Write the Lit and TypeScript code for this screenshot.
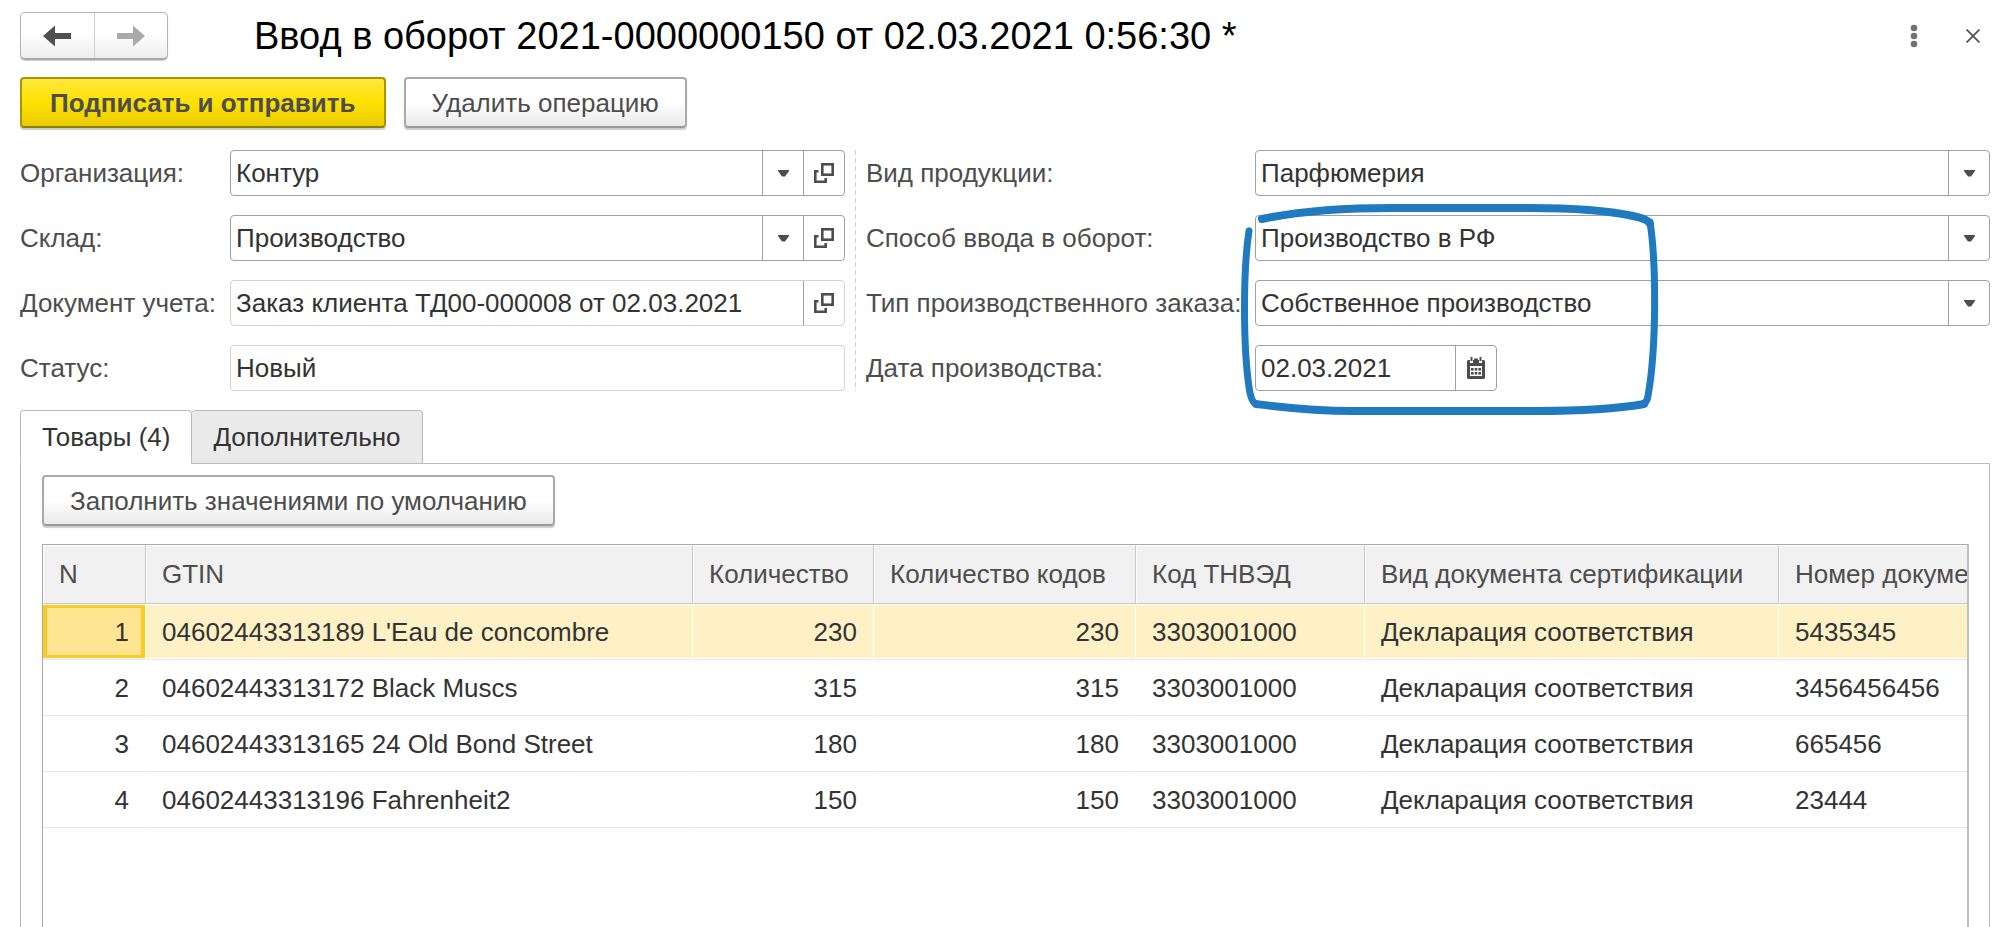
import { LitElement, html, svg, css, nothing } from "lit";
import { customElement, property, state } from "lit/decorators.js";
import { classMap } from "lit/directives/class-map.js";

type Row = [string, string, string, string, string, string, string];

const COLUMNS = [
  { title: "N", cls: "c-n num" },
  { title: "GTIN", cls: "c-gtin" },
  { title: "Количество", cls: "c-qty num" },
  { title: "Количество кодов", cls: "c-codes num" },
  { title: "Код ТНВЭД", cls: "c-tn" },
  { title: "Вид документа сертификации", cls: "c-doc" },
  { title: "Номер документа", cls: "c-no" },
];

const ROWS: Row[] = [
  ["1", "04602443313189 L'Eau de concombre", "230", "230", "3303001000", "Декларация соответствия", "5435345"],
  ["2", "04602443313172 Black Muscs", "315", "315", "3303001000", "Декларация соответствия", "3456456456"],
  ["3", "04602443313165 24 Old Bond Street", "180", "180", "3303001000", "Декларация соответствия", "665456"],
  ["4", "04602443313196 Fahrenheit2", "150", "150", "3303001000", "Декларация соответствия", "23444"],
];

const caretIcon = html`<svg width="11" height="7" viewBox="0 0 11 7" aria-hidden="true">
  <path d="M0 0H11V1L7 6.500H4L0 1Z" fill="#4d4d4d" />
</svg>`;

const openIcon = html`<svg width="20" height="20" viewBox="0 0 20 20" fill="none" stroke="#4d4d4d" stroke-width="2.600" aria-hidden="true">
  <rect x="8.300" y="1.300" width="10.400" height="10.400" />
  <path d="M4.500 8.300H1.300V18.700H11.700V15" />
</svg>`;

const calendarIcon = html`<svg width="18" height="22" viewBox="0 0 18 22" aria-hidden="true">
  <path fill="#4d4d4d" fill-rule="evenodd" d="M1 3H3V6H6V3H12V6H15V3H17L18 4V21L17 22H1L0 21V4ZM3 9V19H15V9Z" />
  <path fill="#4d4d4d" d="M3.500 0H5.500V4H3.500ZM12.500 0H14.500V4H12.500ZM7 1.500H11V4H7Z" />
  ${[4, 7.7, 11.4].map((x) => [11, 15].map((y) => svg`<rect x=${x} y=${y} width="2.600" height="2.600" fill="#4d4d4d" />`))}
</svg>`;

@customElement("form-field")
export class FormField extends LitElement {
  @property() kind: "select" | "text" | "date" = "text";
  @property() label = "";
  @property() value = "";
  @property({ type: Boolean }) readonly = false;
  @property({ type: Boolean }) openable = false;

  static styles = css`
    :host {
      display: grid;
      grid-template-columns: var(--label-width) minmax(0, 1fr);
      align-items: center;
    }
    label {
      color: #4d4d4d;
      white-space: nowrap;
    }
    .box {
      display: flex;
      box-sizing: border-box;
      height: 46px;
      border: 1px solid #a0a0a0;
      border-radius: 4px;
      background: #fff;
      overflow: hidden;
    }
    .box.readonly {
      border-color: #d2d2d2;
    }
    .box.date {
      width: 242px;
    }
    .entry {
      display: grid;
      flex: 1;
      min-width: 0;
    }
    input,
    select,
    .arrow {
      grid-area: 1 / 1;
    }
    input,
    select {
      appearance: none;
      box-sizing: border-box;
      width: 100%;
      min-width: 0;
      border: 0;
      margin: 0;
      padding: 0 5px;
      background: transparent;
      color: #333;
      font: inherit;
      outline: 0;
    }
    .arrow,
    button {
      display: flex;
      align-items: center;
      justify-content: center;
      box-sizing: border-box;
      width: 41px;
      border: 0;
      border-left: 1px solid #a0a0a0;
      padding: 0;
      background: none;
    }
    .arrow {
      justify-self: end;
      pointer-events: none;
    }
  `;

  render() {
    return html`
      <label for="control">${this.label}</label>
      <div class=${classMap({ box: true, readonly: this.readonly, date: this.kind === "date" })}>
        <div class="entry">
          ${this.kind === "select"
            ? html`<select id="control"><option>${this.value}</option></select>
                <span class="arrow">${caretIcon}</span>`
            : html`<input id="control" type="text" .value=${this.value} ?readonly=${this.readonly} />`}
        </div>
        ${this.openable ? html`<button type="button" aria-label="Открыть">${openIcon}</button>` : nothing}
        ${this.kind === "date" ? html`<button type="button" aria-label="Выбрать дату">${calendarIcon}</button>` : nothing}
      </div>
    `;
  }
}

@customElement("app-root")
export class AppRoot extends LitElement {
  @state() private tab = 0;
  @state() private selected = 0;

  static styles = css`
    :host {
      display: flex;
      flex-direction: column;
      box-sizing: border-box;
      min-height: 100vh;
      padding: 11px 5px 0 20px;
      background: #fff;
      color: #333;
      font: 26px/30px "Liberation Sans", Arial, sans-serif;
    }
    button {
      font: inherit;
      color: inherit;
    }
    header {
      display: flex;
      align-items: center;
      height: 50px;
    }
    .nav {
      display: flex;
      box-sizing: border-box;
      width: 148px;
      height: 48px;
      border: 1px solid #b4b4b4;
      border-bottom: 2px solid #a8a8a8;
      border-radius: 5px;
      background: linear-gradient(#fff 40%, #eee);
      box-shadow: 0 1px 1px #ccc;
    }
    .nav button {
      display: flex;
      flex: 1;
      align-items: center;
      justify-content: center;
      border: 0;
      padding: 0;
      background: none;
    }
    .nav button + button {
      border-left: 1px solid #d0d0d0;
    }
    h1 {
      flex: 1;
      margin: 0 0 0 86px;
      color: #000;
      font-size: 38px;
      line-height: 42px;
      font-weight: 400;
      white-space: nowrap;
    }
    .tools {
      display: flex;
      gap: 22px;
    }
    .tools button {
      display: flex;
      align-items: center;
      justify-content: center;
      width: 40px;
      height: 40px;
      border: 0;
      padding: 0;
      background: none;
    }
    .tools button:last-child {
      width: 34px;
    }
    .actions {
      display: flex;
      gap: 18px;
      margin-top: 16px;
    }
    .btn {
      box-sizing: border-box;
      height: 51px;
      border: 2px solid #aaa;
      border-bottom-color: #999;
      border-radius: 4px;
      padding: 0 26px;
      background: linear-gradient(#fff 50%, #e9e9e9);
      box-shadow: 0 2px 1px #ccc;
      color: #4d4d4d;
      white-space: nowrap;
    }
    .btn.primary {
      border-color: #a89600;
      border-bottom-color: #8c7c00;
      padding: 0 28px;
      background: linear-gradient(#ffe83c, #ffe100 50%, #e8cc00);
      font-weight: 700;
    }
    .form {
      display: grid;
      grid-template-columns: minmax(0, 825fr) 1px minmax(0, 1124fr);
      column-gap: 10px;
      margin-top: 22px;
    }
    .half {
      position: relative;
      display: flex;
      flex-direction: column;
      gap: 19px;
    }
    .left {
      --label-width: 210px;
    }
    .right {
      --label-width: 389px;
    }
    .divider {
      background: repeating-linear-gradient(#d0d0d0 0 5px, transparent 5px 8px);
    }
    .mark {
      position: absolute;
      left: 374px;
      top: 50px;
      pointer-events: none;
    }
    .tabs {
      display: flex;
      margin-top: 19px;
    }
    .tabs button {
      box-sizing: border-box;
      height: 54px;
      border: 1px solid #bbb;
      border-radius: 4px 4px 0 0;
      padding: 0 21px;
      background: #eaeaea;
      white-space: nowrap;
    }
    .tabs button + button {
      border-left-width: 0;
    }
    .tabs .active {
      z-index: 1;
      background: #fff;
      border-bottom-color: #fff;
    }
    .panel {
      display: flex;
      flex: 1;
      flex-direction: column;
      align-items: flex-start;
      margin-top: -1px;
      border: 1px solid #bbb;
      border-bottom: 0;
      padding: 11px 20px 0 21px;
    }
    .grid {
      flex: 1;
      box-sizing: border-box;
      width: 100%;
      margin-top: 18px;
      border: 1px solid #aaa;
      border-right: 2px solid #c0c0c0;
      border-bottom: 0;
      overflow: hidden;
    }
    table {
      width: calc(100% + 120px);
      table-layout: fixed;
      border-collapse: separate;
      border-spacing: 0;
    }
    th,
    td {
      box-sizing: border-box;
      padding: 0 16px;
      text-align: left;
      font-weight: 400;
      white-space: nowrap;
    }
    th {
      height: 59px;
      border: 1px solid #fff;
      border-right-color: #c8c8c8;
      border-bottom-color: #c8c8c8;
      background: #f1f1f1;
      color: #4d4d4d;
      padding: 0 15px 2px;
    }
    td {
      height: 56px;
      border-right: 1px solid #fff;
      border-bottom: 1px solid #e6e6e6;
    }
    td.num {
      text-align: right;
    }
    .c-n {
      width: 103px;
    }
    .c-gtin {
      width: 547px;
    }
    .c-qty {
      width: 181px;
    }
    .c-codes {
      width: 262px;
    }
    .c-tn {
      width: 229px;
    }
    .c-doc {
      width: 414px;
    }
    .current td {
      background: #fef1c6;
      background-clip: padding-box;
      box-shadow: inset 0 1px #fff, inset 0 -1px #fff;
    }
    .current td.c-n {
      background: #ffe591;
      background-clip: padding-box;
      box-shadow: inset 0 1px #fff, inset 0 -1px #fff, inset 0 0 0 4px #fbcb22;
    }
  `;

  render() {
    return html`
      <header>
        <div class="nav">
          <button type="button" aria-label="Назад">
            <svg width="28" height="22" viewBox="0 0 28 22"><path d="M0 11L12 0.500V8H28V14H12V21.500Z" fill="#505050" /></svg>
          </button>
          <button type="button" aria-label="Вперед">
            <svg width="28" height="22" viewBox="0 0 28 22"><path d="M28 11L16 0.500V8H0V14H16V21.500Z" fill="#aaa" /></svg>
          </button>
        </div>
        <h1>Ввод в оборот 2021-0000000150 от 02.03.2021 0:56:30 *</h1>
        <div class="tools">
          <button type="button" aria-label="Меню">
            <svg width="8" height="24" viewBox="0 0 8 24" fill="#707070">
              <circle cx="4" cy="4" r="3.300" /><circle cx="4" cy="12" r="3.300" /><circle cx="4" cy="20" r="3.300" />
            </svg>
          </button>
          <button type="button" aria-label="Закрыть">
            <svg width="14" height="14" viewBox="0 0 14 14" stroke="#555" stroke-width="1.800">
              <path d="M0.500 0.500L13.500 13.500M13.500 0.500L0.500 13.500" />
            </svg>
          </button>
        </div>
      </header>

      <div class="actions">
        <button type="button" class="btn primary">Подписать и отправить</button>
        <button type="button" class="btn">Удалить операцию</button>
      </div>

      <div class="form">
        <div class="half left">
          <form-field kind="select" label="Организация:" value="Контур" openable></form-field>
          <form-field kind="select" label="Склад:" value="Производство" openable></form-field>
          <form-field label="Документ учета:" value="Заказ клиента ТД00-000008 от 02.03.2021" readonly openable></form-field>
          <form-field label="Статус:" value="Новый" readonly></form-field>
        </div>
        <div class="divider"></div>
        <div class="half right">
          <form-field kind="select" label="Вид продукции:" value="Парфюмерия"></form-field>
          <form-field kind="select" label="Способ ввода в оборот:" value="Производство в РФ"></form-field>
          <form-field kind="select" label="Тип производственного заказа:" value="Собственное производство"></form-field>
          <form-field kind="date" label="Дата производства:" value="02.03.2021"></form-field>
          <svg class="mark" width="424" height="220" viewBox="1240 200 424 220" fill="none" stroke="#1f7ac0" stroke-linecap="round" stroke-linejoin="round" aria-hidden="true">
            <path stroke-width="8" d="M1262 219C1300 211 1345 208 1392 208H1530C1575 208 1610 211 1633 216Q1648 219 1650 224" />
            <path stroke-width="7" d="M1650 222C1656 260 1657 345 1648 396Q1647 404 1640 405" />
            <path stroke-width="8" d="M1644 404C1610 410 1570 411 1537 411H1353C1310 411 1280 407 1256 404" />
            <path stroke-width="7" d="M1256 404Q1251 402 1249 387C1243 345 1243 270 1249 231" />
          </svg>
        </div>
      </div>

      <div class="tabs" role="tablist">
        ${["Товары (4)", "Дополнительно"].map(
          (name, i) => html`<button
            type="button"
            role="tab"
            aria-selected=${this.tab === i}
            class=${classMap({ active: this.tab === i })}
            @click=${() => (this.tab = i)}
          >${name}</button>`
        )}
      </div>

      <div class="panel" role="tabpanel">
        <button type="button" class="btn">Заполнить значениями по умолчанию</button>
        <div class="grid">
          <table>
            <thead>
              <tr>${COLUMNS.map((c) => html`<th class=${c.cls}>${c.title}</th>`)}</tr>
            </thead>
            <tbody>
              ${ROWS.map(
                (row, r) => html`<tr class=${classMap({ current: r === this.selected })} @click=${() => (this.selected = r)}>
                  ${row.map((cell, i) => html`<td class=${COLUMNS[i].cls}>${cell}</td>`)}
                </tr>`
              )}
            </tbody>
          </table>
        </div>
      </div>
    `;
  }
}
